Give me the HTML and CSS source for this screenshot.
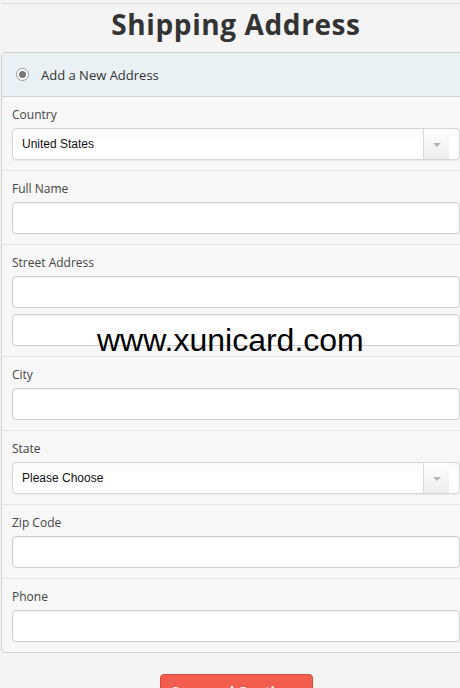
FILE: index.html
```html
<!DOCTYPE html>
<html lang="en">
<head>
    <meta charset="UTF-8">
    <title>Shipping Address</title>
    <link rel="stylesheet" href="styles.css">
</head>
<body>

<div class="page">
    <h1 class="page-title">Shipping Address</h1>

    <div class="address-panel">
        <div class="panel-header">
            <span class="radio"><span class="radio-dot"></span></span>
            <span>Add a New Address</span>
        </div>

        <div class="field-row">
            <label>Country</label>
            <div class="select-box">
                <span class="select-value">United States</span>
                <span class="select-arrow"></span>
            </div>
        </div>

        <div class="field-row">
            <label>Full Name</label>
            <input type="text">
        </div>

        <div class="field-row">
            <label>Street Address</label>
            <input type="text">
            <input type="text" class="extra-line">
        </div>

        <div class="field-row">
            <label>City</label>
            <input type="text">
        </div>

        <div class="field-row">
            <label>State</label>
            <div class="select-box">
                <span class="select-value">Please Choose</span>
                <span class="select-arrow"></span>
            </div>
        </div>

        <div class="field-row">
            <label>Zip Code</label>
            <input type="text">
        </div>

        <div class="field-row">
            <label>Phone</label>
            <input type="text">
        </div>
    </div>

    <div class="actions">
        <button>Save and Continue</button>
    </div>

    <div class="watermark">www.xunicard.com</div>
</div>

</body>
</html>
```

FILE: styles.css
```css
body, html {
    margin: 0;
    padding: 0;
    background: #f4f4f4;
    font-family: 'Open Sans', sans-serif;
    color: #333;
    overflow: hidden;
}

.page {
    position: relative;
    width: 470px;
    margin-left: 1px;
    border-top: 1px solid #dcdcdc;
    margin-top: 3px;
}

.page-title {
    margin: 0;
    text-align: center;
    font-size: 28px;
    font-weight: bold;
    line-height: 40px;
    color: #333;
    height: 48px;
    letter-spacing: 0.6px;
}

.address-panel {
    background: #f7f7f7;
    border: 1px solid #cfcfcf;
    border-radius: 4px;
}

.panel-header {
    display: flex;
    align-items: center;
    height: 43px;
    padding-left: 14px;
    background: #e9f1f4;
    border-bottom: 1px solid #cfd4d6;
    border-radius: 4px 4px 0 0;
    font-size: 13px;
    gap: 12px;
}

.radio {
    width: 11px;
    height: 11px;
    border: 1px solid #9a9a9a;
    border-radius: 50%;
    background: #fff;
    display: flex;
    align-items: center;
    justify-content: center;
}

.radio-dot {
    width: 7px;
    height: 7px;
    border-radius: 50%;
    background: #777;
}

.field-row {
    padding: 9px 10px 10px;
    border-bottom: 1px solid #e6e6e6;
}

.field-row:last-child {
    border-bottom: none;
}

.field-row label {
    display: block;
    font-size: 12px;
    line-height: 18px;
    margin-bottom: 4px;
    color: #444;
}

input[type="text"] {
    display: block;
    box-sizing: border-box;
    width: 100%;
    height: 32px;
    border: 1px solid #cfcfcf;
    border-radius: 4px;
    background: #fff;
    box-shadow: inset 0 1px 2px rgba(0, 0, 0, 0.06);
}

.extra-line {
    margin-top: 6px;
}

.select-box {
    display: flex;
    box-sizing: border-box;
    height: 32px;
    border: 1px solid #d6d6d6;
    border-radius: 4px;
    background: linear-gradient(#fafafa, #fff 40%);
    box-shadow: 0 1px 1px rgba(0, 0, 0, 0.05);
}

.select-value {
    flex-grow: 1;
    padding-left: 9px;
    font-family: 'Liberation Sans', Arial, sans-serif;
    font-size: 12px;
    line-height: 30px;
    color: #111;
}

.select-arrow {
    width: 25px;
    border-left: 1px solid #d9d9d9;
    background: linear-gradient(#fff, #eee);
    display: flex;
    align-items: center;
    justify-content: center;
    margin-right: 10px;
}

.select-arrow::after {
    content: '';
    border-left: 4px solid transparent;
    border-right: 4px solid transparent;
    border-top: 4px solid #b5b5b5;
    margin-top: 2px;
}

.actions {
    padding-top: 21px;
    text-align: center;
}

button {
    width: 153px;
    height: 34px;
    background: #f25d4e;
    border: 1px solid #d84a3c;
    border-radius: 4px;
    color: white;
    font-family: 'Open Sans', sans-serif;
    font-size: 14px;
    font-weight: bold;
    margin-left: 1px;
}

.watermark {
    position: absolute;
    left: 96px;
    top: 318px;
    font-family: 'Liberation Sans', Arial, sans-serif;
    font-size: 32px;
    color: #000;
}
```
